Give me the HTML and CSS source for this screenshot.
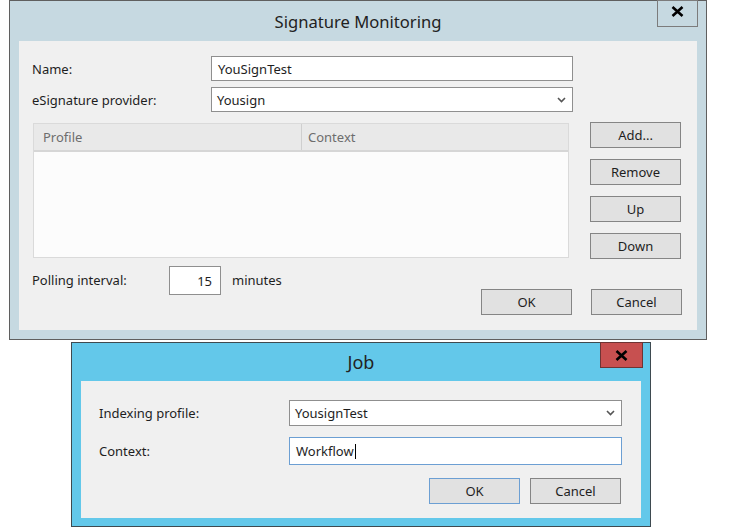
FILE: index.html
```html
<!DOCTYPE html>
<html lang="en">
<head>
  <meta charset="UTF-8" />
  <title>Signature Monitoring</title>
  <link rel="stylesheet" href="styles.css">
</head>
<body>
  <div class="win win-sig">
    <div class="titlebar">
      <span></span>
      <span class="title">Signature Monitoring</span>
      <span class="close close-grey">
        <svg width="13" height="11" viewBox="0 0 13 11"><path d="M1.5 1 L11.5 10 M11.5 1 L1.5 10" stroke="#000" stroke-width="2.6" fill="none"/></svg>
      </span>
    </div>
    <div class="client client-sig">
      <div class="fields fields-sig">
        <label>Name:</label>
        <div class="textbox">YouSignTest</div>
        <label>eSignature provider:</label>
        <div class="combo">
          <span>Yousign</span>
          <svg width="9" height="6" viewBox="0 0 9 6"><path d="M1 1 L4.5 4.5 L8 1" stroke="#555" stroke-width="1.6" fill="none"/></svg>
        </div>
      </div>

      <div class="middle">
        <div class="listview">
          <div class="lv-head">
            <div class="lv-col lv-profile">Profile</div>
            <div class="lv-col">Context</div>
          </div>
        </div>
        <div class="side-buttons">
          <button>Add...</button>
          <button>Remove</button>
          <button>Up</button>
          <button>Down</button>
        </div>
      </div>

      <div class="bottom">
        <label class="poll-label">Polling interval:</label>
        <div class="textbox num">15</div>
        <span class="unit">minutes</span>
        <div class="actions actions-sig">
          <button>OK</button>
          <button>Cancel</button>
        </div>
      </div>
    </div>
  </div>

  <div class="win win-job">
    <div class="titlebar titlebar-job">
      <span></span>
      <span class="title">Job</span>
      <span class="close close-red">
        <svg width="13" height="11" viewBox="0 0 13 11"><path d="M1.5 1 L11.5 10 M11.5 1 L1.5 10" stroke="#000" stroke-width="2.6" fill="none"/></svg>
      </span>
    </div>
    <div class="client client-job">
      <div class="fields fields-job">
        <label>Indexing profile:</label>
        <div class="combo">
          <span>YousignTest</span>
          <svg width="9" height="6" viewBox="0 0 9 6"><path d="M1 1 L4.5 4.5 L8 1" stroke="#555" stroke-width="1.6" fill="none"/></svg>
        </div>
        <label>Context:</label>
        <div class="textbox focused">Workflow<span class="caret"></span></div>
      </div>
      <div class="actions actions-job">
        <button class="default">OK</button>
        <button>Cancel</button>
      </div>
    </div>
  </div>
</body>
</html>
```

FILE: styles.css
```css
* { box-sizing: border-box; }
body { margin: 0; background: #fff; font-family: "Noto Sans", "Open Sans", sans-serif; font-size: 13px; color: #1e1e1e; }

.win { border: 1px solid #5f5f5f; display: flex; flex-direction: column; }
.win-sig { margin-left: 9px; width: 698px; height: 340px; background: #c6d9e1; }
.win-job { margin-left: 71px; margin-top: 2px; width: 580px; height: 185px; background: #63c8ea; border-color: #3e4a50; }

.titlebar { display: grid; grid-template-columns: 1fr auto 1fr; height: 40px; }
.titlebar-job { height: 38px; }
.title { align-self: center; font-size: 16.6px; color: #222; }
.titlebar-job .title { font-size: 18px; }
.close { justify-self: end; align-self: start; display: flex; justify-content: center; }
.close-grey { width: 41px; height: 27px; margin: -1px 8px 0 0; border: 1px solid #7c7c7c; padding-top: 5px; }
.close-red { width: 43px; height: 26px; margin: -1px 7px 0 0; background: #c75050; border: 1px solid #6e3434; align-items: center; }

.client { background: #f0f0f0; margin: 0 9px 9px; }
.client-sig { height: 289px; padding: 15px 15px 0 13px; }
.client-job { height: 137px; margin-bottom: 8px; padding: 19px 19px 0 18px; }

.fields { display: grid; align-items: center; }
.fields-sig { grid-template-columns: 179px 362px; grid-auto-rows: 25px; row-gap: 6px; }
.fields-job { grid-template-columns: 190px 333px; grid-template-rows: 26px 28px; row-gap: 11px; }

.textbox, .combo { height: 100%; background: #fff; border: 1px solid #8f8f8f; padding: 0 6px; display: flex; align-items: center; }
.combo { justify-content: space-between; padding: 0 6px 0 5px; }
.textbox.focused { border-color: #6c9fd3; padding-left: 6px; }
.caret { display: inline-block; width: 1px; height: 15px; background: #000; margin-left: 1px; }

.middle { display: flex; margin-top: 10px; }
.listview { width: 536px; height: 135px; margin: 1px 0 0 1px; border: 1px solid #dadada; background: #fcfcfc; }
.lv-head { display: flex; height: 28px; background: #e9e9e9; border-bottom: 2px solid #d6d6d6; color: #6d6d6d; }
.lv-col { padding: 4px 0 0 9px; }
.lv-profile { width: 268px; border-right: 1px solid #cfcfcf; }
.lv-profile + .lv-col { padding-left: 6px; }
.side-buttons { display: flex; flex-direction: column; gap: 11px; margin-left: 21px; }

button { width: 91px; height: 26px; font: inherit; color: #1e1e1e; background: #e1e1e1; border: 1px solid #858585; padding: 0; }
button.default { border-color: #6c9fd3; }

.bottom { display: flex; align-items: flex-start; margin-top: 7px; }
.poll-label { width: 137px; line-height: 29px; }
.textbox.num { width: 52px; height: 29px; justify-content: flex-end; padding-right: 8px; }
.unit { margin-left: 11px; line-height: 29px; }
.actions { display: flex; }
.actions-sig { margin-left: auto; margin-top: 23px; gap: 19px; }
.actions-job { justify-content: flex-end; gap: 10px; margin-top: 13px; margin-right: 1px; }
```
